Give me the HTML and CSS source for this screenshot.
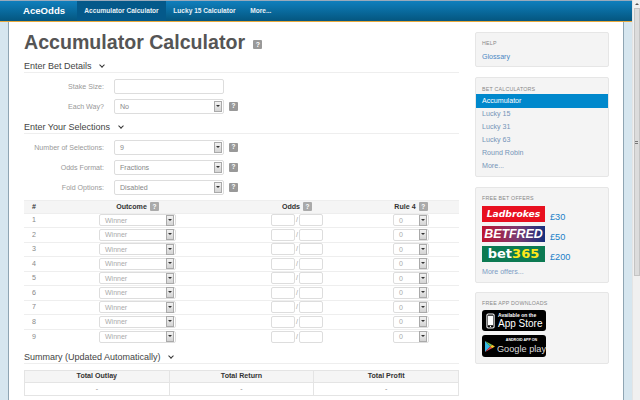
FILE: index.html
```html
<!DOCTYPE html>
<html lang="en">
<head>
<meta charset="utf-8">
<title>Accumulator Calculator</title>
<link rel="stylesheet" href="styles.css">
</head>
<body>
<div class="window">
  <div class="page">
    <nav class="nav">
      <span class="brand">AceOdds</span>
      <a class="nav-link active">Accumulator Calculator</a>
      <a class="nav-link">Lucky 15 Calculator</a>
      <a class="nav-link">More...</a>
    </nav>
    <div class="frame">
      <div class="content">
        <main class="main">
          <h1 class="title">Accumulator Calculator <span class="help help-lg">?</span></h1>

          <h2 class="section">Enter Bet Details <span class="chev"></span></h2>
          <div class="form">
            <div class="field"><label class="label">Stake Size:</label><input class="input"></div>
            <div class="field"><label class="label">Each Way?</label><div class="select"><span>No</span><i class="arrow"></i></div><span class="help">?</span></div>
          </div>

          <h2 class="section section-2">Enter Your Selections <span class="chev"></span></h2>
          <div class="form">
            <div class="field"><label class="label">Number of Selections:</label><div class="select"><span>9</span><i class="arrow"></i></div><span class="help">?</span></div>
            <div class="field"><label class="label">Odds Format:</label><div class="select"><span>Fractions</span><i class="arrow"></i></div><span class="help">?</span></div>
            <div class="field"><label class="label">Fold Options:</label><div class="select"><span>Disabled</span><i class="arrow"></i></div><span class="help">?</span></div>
          </div>

          <div class="grid">
            <div class="row head">
              <div>#</div>
              <div>Outcome <span class="help help-sm">?</span></div>
              <div>Odds <span class="help help-sm">?</span></div>
              <div>Rule 4 <span class="help help-sm">?</span></div>
            </div>
            <div class="row"><div>1</div><div><div class="select sm out"><span>Winner</span><i class="arrow"></i></div></div><div class="odds"><input class="input sm"><span>/</span><input class="input sm"></div><div><div class="select sm rule"><span>0</span><i class="arrow"></i></div></div></div>
            <div class="row"><div>2</div><div><div class="select sm out"><span>Winner</span><i class="arrow"></i></div></div><div class="odds"><input class="input sm"><span>/</span><input class="input sm"></div><div><div class="select sm rule"><span>0</span><i class="arrow"></i></div></div></div>
            <div class="row"><div>3</div><div><div class="select sm out"><span>Winner</span><i class="arrow"></i></div></div><div class="odds"><input class="input sm"><span>/</span><input class="input sm"></div><div><div class="select sm rule"><span>0</span><i class="arrow"></i></div></div></div>
            <div class="row"><div>4</div><div><div class="select sm out"><span>Winner</span><i class="arrow"></i></div></div><div class="odds"><input class="input sm"><span>/</span><input class="input sm"></div><div><div class="select sm rule"><span>0</span><i class="arrow"></i></div></div></div>
            <div class="row"><div>5</div><div><div class="select sm out"><span>Winner</span><i class="arrow"></i></div></div><div class="odds"><input class="input sm"><span>/</span><input class="input sm"></div><div><div class="select sm rule"><span>0</span><i class="arrow"></i></div></div></div>
            <div class="row"><div>6</div><div><div class="select sm out"><span>Winner</span><i class="arrow"></i></div></div><div class="odds"><input class="input sm"><span>/</span><input class="input sm"></div><div><div class="select sm rule"><span>0</span><i class="arrow"></i></div></div></div>
            <div class="row"><div>7</div><div><div class="select sm out"><span>Winner</span><i class="arrow"></i></div></div><div class="odds"><input class="input sm"><span>/</span><input class="input sm"></div><div><div class="select sm rule"><span>0</span><i class="arrow"></i></div></div></div>
            <div class="row"><div>8</div><div><div class="select sm out"><span>Winner</span><i class="arrow"></i></div></div><div class="odds"><input class="input sm"><span>/</span><input class="input sm"></div><div><div class="select sm rule"><span>0</span><i class="arrow"></i></div></div></div>
            <div class="row"><div>9</div><div><div class="select sm out"><span>Winner</span><i class="arrow"></i></div></div><div class="odds"><input class="input sm"><span>/</span><input class="input sm"></div><div><div class="select sm rule"><span>0</span><i class="arrow"></i></div></div></div>
          </div>

          <h2 class="section section-3">Summary (Updated Automatically) <span class="chev"></span></h2>
          <div class="summary">
            <div class="sum-head">Total Outlay</div><div class="sum-head">Total Return</div><div class="sum-head">Total Profit</div>
            <div class="sum-cell">-</div><div class="sum-cell">-</div><div class="sum-cell">-</div>
          </div>
        </main>

        <aside class="side">
          <section class="panel p-help">
            <h3 class="panel-title">Help</h3>
            <a class="link">Glossary</a>
          </section>
          <section class="panel p-calc">
            <h3 class="panel-title">Bet Calculators</h3>
            <a class="item current">Accumulator</a>
            <a class="item">Lucky 15</a>
            <a class="item">Lucky 31</a>
            <a class="item">Lucky 63</a>
            <a class="item">Round Robin</a>
            <a class="item">More...</a>
          </section>
          <section class="panel p-offers">
            <h3 class="panel-title">Free Bet Offers</h3>
            <div class="offer"><span class="logo ladbrokes">Ladbrokes</span><span class="amount">£30</span></div>
            <div class="offer"><span class="logo betfred">BETFRED</span><span class="amount">£50</span></div>
            <div class="offer"><span class="logo bet365">bet<b>365</b></span><span class="amount">£200</span></div>
            <a class="link more">More offers...</a>
          </section>
          <section class="panel p-apps">
            <h3 class="panel-title">Free App Downloads</h3>
            <div class="badge apple">
              <svg class="phone" viewBox="0 0 10 17" width="9" height="16"><rect x="1" y="0.7" width="8" height="15.6" rx="1.4" fill="none" stroke="#fff" stroke-width="1.2"/><rect x="2.2" y="2.6" width="5.6" height="10.6" fill="#fff"/><circle cx="5" cy="14.6" r=".7" fill="#fff"/></svg>
              <div class="badge-text"><small>Available on the</small><strong>App Store</strong></div>
            </div>
            <div class="badge google">
              <svg class="play" viewBox="0 0 12 13" width="12" height="13"><path d="M0 0L6.3 6.5L0 13Z" fill="#35b8e8"/><path d="M0 0L8.5 4.4L6.3 6.5Z" fill="#6fc35a"/><path d="M0 13L8.5 8.6L6.3 6.5Z" fill="#e8434e"/><path d="M8.5 4.4L12 6.5L8.5 8.6L6.3 6.5Z" fill="#f7c52d"/></svg>
              <div class="badge-text g"><small>ANDROID APP ON</small><strong>Google play</strong></div>
            </div>
          </section>
        </aside>
      </div>
    </div>
  </div>
  <div class="scrollbar"><span class="up"></span><span class="thumb"><i class="grip"></i></span></div>
</div>
</body>
</html>
```

FILE: styles.css
```css
* { box-sizing: border-box; }
html, body { margin: 0; height: 400px; overflow: hidden; }
body { font-family: "Liberation Sans", Arial, sans-serif; font-size: 7.1px; color: #666; background: #fff; }

.window { display: flex; width: 640px; height: 400px; overflow: hidden; }
.page { width: 632px; display: flex; flex-direction: column; background: #d6e6ef; }

.nav { height: 22px; flex: none; display: flex; align-items: stretch; padding-left: 23px;
  background: linear-gradient(#0f7fbd, #04567f); border-top: 1px solid #9ab; border-bottom: 1px solid #e8a93c; color: #fff; }
.brand { font-size: 9.6px; font-weight: bold; width: 54px; line-height: 20px; }
.nav-link { font-size: 6.6px; font-weight: bold; line-height: 20px; padding: 0 7.3px; color: #e6f0f6; }
.nav-link.active { background: #04598a; }

.frame { flex: 1; margin: 0 8px; background: #fff; border-left: 1px solid #8fa5b3; border-right: 1px solid #8fa5b3; min-height: 0; }
.content { display: flex; gap: 16px; padding-left: 15px; }
.main { width: 435px; flex: none; }

.title { margin: 8px 0 0; font-size: 19.6px; line-height: 24px; font-weight: bold; color: #555; }
.help { display: inline-flex; align-items: center; justify-content: center; width: 9px; height: 9px; border-radius: 1px;
  background: #999; color: #fff; font-size: 6.5px; font-weight: bold; flex: none; line-height: 1; }
.help-lg { margin-left: 3px; vertical-align: 2px; font-size: 7px; }
.help-sm { margin-left: 3px; background: #aaa; }

.section { margin: 7px 0 0; height: 12px; font-size: 9px; line-height: 11px; font-weight: normal; color: #444; border-bottom: 1px solid #eee; }
.section-2 { margin-top: 8px; }
.section-3 { margin-top: 8px; }
.chev { display: inline-block; width: 4px; height: 4px; margin: 0 0 2px 6px; border-right: 1.4px solid #333; border-bottom: 1.4px solid #333; transform: rotate(45deg); }

.form { display: flex; flex-direction: column; gap: 5px; margin-top: 6px; }
.field { display: flex; align-items: center; height: 15px; }
.label { width: 80px; text-align: right; margin-right: 10px; color: #999; }
.input { width: 110px; height: 15px; border: 1px solid #ddd; border-radius: 2px; background: #fff; padding: 0; margin: 0; display: block; }
.select { width: 110px; height: 15px; border: 1px solid #ddd; border-radius: 2px; background: #fff; display: flex; align-items: center;
  justify-content: space-between; padding-left: 5px; color: #888; margin-right: 5px; flex: none; }
.arrow { width: 8px; height: 11px; margin-right: 1px; background: linear-gradient(#f2f2f2, #d4d4d4); border: 1px solid #aaa; display: block; }
.arrow::after { content: ""; display: block; margin: 3px auto 0; width: 0; height: 0; border: 2px solid transparent; border-top: 2.5px solid #333; border-bottom: 0; }

.grid { margin-top: 5px; }
.row { display: grid; grid-template-columns: 20px 187px 132px 96px; height: 14.5px; border-bottom: 1px solid #eee; align-items: center; text-align: center; color: #888; }
.row > div { display: flex; justify-content: center; align-items: center; }
.row.head { height: 13.5px; background: #f5f5f5; border-top: 1px solid #eee; color: #333; font-weight: bold; }
.select.sm { height: 12px; margin: 0; padding-left: 5px; color: #aaa; font-size: 7px; }
.select.out { width: 77px; }
.select.rule { width: 36px; }
.input.sm { width: 24px; height: 12px; }
.odds span { width: 4px; color: #aaa; }
.row:last-child { border-bottom: 0; }

.summary { margin-top: 6px; display: grid; grid-template-columns: repeat(3, 1fr); border-top: 1px solid #e4e4e4; border-left: 1px solid #e4e4e4; }
.sum-head, .sum-cell { border-right: 1px solid #e4e4e4; border-bottom: 1px solid #e4e4e4; text-align: center; }
.sum-head { height: 12px; line-height: 11px; background: #f5f5f5; font-weight: bold; color: #333; }
.sum-cell { height: 13px; line-height: 12px; color: #888; }

.side { width: 134px; flex: none; padding-top: 10px; display: flex; flex-direction: column; }
.panel { background: #f4f4f4; border: 1px solid #e6e6e6; border-radius: 2px; }
.p-help { height: 35px; padding: 7px 0 0 6px; }
.p-calc { height: 100px; margin-top: 10px; padding-top: 8px; }
.p-offers { height: 96px; margin-top: 10px; padding: 7px 0 0 6px; }
.p-apps { height: 72px; margin-top: 9px; padding: 7px 0 0 6px; }
.panel-title { margin: 0; font-size: 5.3px; line-height: 6px; font-weight: normal; text-transform: uppercase; letter-spacing: .2px; color: #888; }
.p-calc .panel-title { padding-left: 6px; margin-bottom: 2px; }
.link { display: block; color: #4b88c4; line-height: 10px; margin-top: 6px; }
.item { display: block; height: 13px; line-height: 15px; padding-left: 6px; color: #7594b8; }
.item.current { background: #0088cc; color: #fff; height: 14px; margin-bottom: -1px; }

.offer { display: flex; align-items: center; height: 16px; margin-top: 4px; gap: 5px; }
.p-offers .panel-title { margin-bottom: 5px; }
.p-offers .offer:first-of-type { margin-top: 0; }
.logo { width: 63px; height: 16px; display: block; text-align: center; overflow: hidden; color: #fff; font-weight: bold; }
.ladbrokes { background: #e8101f; font-style: italic; font-family: "DejaVu Sans", sans-serif; font-size: 9.2px; line-height: 16px; }
.betfred { background: linear-gradient(90deg, #c0132f, #7c3a70 55%, #14307e); font-style: italic; font-size: 12.4px; line-height: 16px; }
.bet365 { background: #0c7a52; font-size: 13px; line-height: 15px; font-family: "DejaVu Sans", sans-serif; }
.bet365 b { color: #ffe81a; }
.amount { color: #1a80c8; font-size: 9.2px; line-height: 16px; margin-top: 5px; }
.more { margin-top: 5px; color: #7b9cc4; }

.badge { width: 64px; height: 21px; background: #000; border-radius: 3px; margin-top: 3px; color: #fff; display: flex; align-items: center; gap: 3px; padding-left: 4px; }
.p-apps .panel-title { margin-bottom: 4px; }
.badge.google { height: 22px; margin-top: 4px; gap: 2px; padding-left: 3px; }
.badge-text { display: flex; flex-direction: column; line-height: 1; white-space: nowrap; }
.badge-text small { font-size: 5px; font-weight: bold; line-height: 6px; }
.badge-text strong { font-size: 10px; font-weight: normal; line-height: 11px; }
.badge-text.g { align-items: center; }
.badge-text.g small { font-size: 3.6px; line-height: 5px; }
.badge-text.g strong { font-size: 9.2px; line-height: 12px; color: #ddd; }

.scrollbar { width: 8px; background: #f0f0f0; border-left: 1px solid #e4e4e4; display: flex; flex-direction: column; }
.up { height: 8px; display: block; }
.up::after { content: ""; display: block; margin: 3px auto 0; width: 0; height: 0; border: 2px solid transparent; border-bottom: 2.5px solid #555; border-top: 0; }
.thumb { display: flex; align-items: center; justify-content: center; width: 6px; margin: 0 auto; height: 268px; background: #dcdcdc; border: 1px solid #c4c4c4; }
.grip { display: block; width: 3px; height: 3px; border-top: 1px solid #777; border-bottom: 1px solid #777; }
```
